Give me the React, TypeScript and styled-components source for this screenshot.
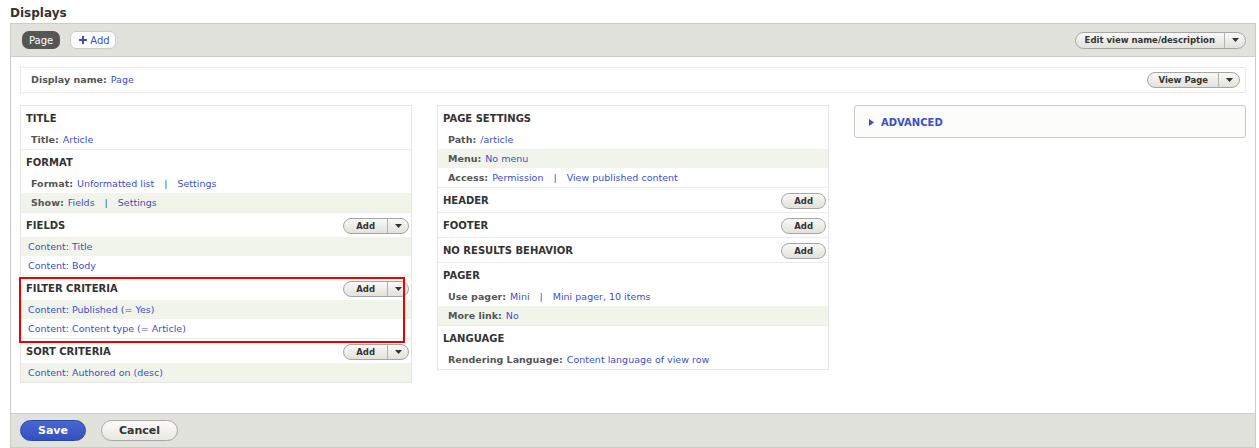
import React from "react";
import styled, { createGlobalStyle } from "styled-components";

const Global = createGlobalStyle`
  html, body { margin: 0; padding: 0; background: #fff; }
  body { font-family: "DejaVu Sans", Verdana, sans-serif; color: #333; }
  * { box-sizing: border-box; }
`;

const LINK = "#3d4fc6";
const SHADE = "#f0f4ea";

const Page = styled.div`
  padding: 0 3px 0 10px;
`;

const Heading = styled.h2`
  margin: 0 0 1px;
  padding-top: 4px;
  font-size: 12px;
  line-height: 18px;
  font-weight: bold;
  color: #333;
`;

const Frame = styled.div`
  border: 1px solid #ccc;
`;

const TopBar = styled.div`
  display: flex;
  align-items: center;
  justify-content: space-between;
  height: 33px;
  padding: 0 9px 0 11px;
  background: #e1e2dc;
  border-bottom: 1px solid #ccc;
`;

const Tabs = styled.div`
  display: flex;
  align-items: center;
  gap: 10px;
`;

const Tab = styled.span`
  display: inline-flex;
  align-items: center;
  height: 18px;
  padding: 0 7px;
  border-radius: 7px;
  background: #565656;
  color: #fff;
  font-size: 10px;
`;

const AddTab = styled.span`
  display: inline-flex;
  align-items: center;
  gap: 3px;
  height: 18px;
  padding: 0 5px 0 8px;
  border: 1px solid #ccc;
  border-radius: 6px;
  background: #fff;
  color: ${LINK};
  font-size: 10px;
`;

const Split = styled.span<{ $h: number }>`
  display: inline-flex;
  align-items: stretch;
  height: ${(p) => p.$h}px;
  border: 1px solid #a6a6a6;
  border-radius: ${(p) => p.$h / 2 + 1}px;
  background: linear-gradient(to bottom, #f9f9f7, #e2e1da);
  overflow: hidden;
`;

const SplitMain = styled.span<{ $pad: number }>`
  display: flex;
  align-items: center;
  padding: 0 ${(p) => p.$pad}px;
  font-size: 8.5px;
  font-weight: bold;
  color: #333;
  white-space: nowrap;
`;

const SplitArrow = styled.span`
  display: flex;
  align-items: center;
  justify-content: center;
  width: 21px;
  border-left: 1px solid #b5b5b0;
`;

const Body = styled.div`
  padding: 10px 9px 30px;
`;

const NameBar = styled.div`
  display: flex;
  align-items: center;
  justify-content: space-between;
  height: 26px;
  padding: 0 5px 0 10px;
  border: 1px solid #eaeaea;
  margin-bottom: 12px;
`;

const NameText = styled.span`
  display: flex;
  align-items: center;
  font-size: 9.5px;
  padding-bottom: 1px;
`;

const Columns = styled.div`
  display: grid;
  grid-template-columns: repeat(3, 1fr);
  column-gap: 25px;
  align-items: start;
`;

const Column = styled.div`
  border: 1px solid #e6e6e6;
  background: #fff;
`;

const Section = styled.div<{ $highlight?: boolean }>`
  position: relative;
  border-bottom: 1px solid #ececec;
  &:last-child { border-bottom: none; }
  ${(p) =>
    p.$highlight &&
    `&::after {
      content: "";
      position: absolute;
      left: -2px;
      right: 6px;
      top: 1px;
      bottom: -5px;
      border: 2px solid #ee0000;
      pointer-events: none;
      z-index: 2;
    }`}
`;

const SectionHeader = styled.div`
  display: flex;
  align-items: center;
  justify-content: space-between;
  height: 24px;
  padding: 1px 2px 0 5px;
`;

const SectionTitle = styled.span`
  font-size: 10px;
  font-weight: bold;
  color: #333;
  text-transform: uppercase;
`;

const Row = styled.div<{ $shaded?: boolean; $item?: boolean }>`
  display: flex;
  align-items: center;
  height: 19px;
  padding-left: ${(p) => (p.$item ? 7 : 10)}px;
  background: ${(p) => (p.$shaded ? SHADE : "transparent")};
  font-size: 9.5px;
  white-space: nowrap;
`;

const Label = styled.span`
  font-weight: bold;
  color: #555;
  margin-right: 4px;
`;

const Link = styled.span`
  color: ${LINK};
`;

const Pipe = styled.span`
  color: ${LINK};
  margin: 0 10px;
`;

const Advanced = styled.div`
  display: flex;
  align-items: center;
  gap: 7px;
  height: 33px;
  padding: 1px 0 0 14px;
  border: 1px solid #c8c8c8;
  border-radius: 3px;
  background: #fcfcfa;
  color: #3a4fc8;
  font-size: 10px;
  font-weight: bold;
`;

const BottomBar = styled.div`
  display: flex;
  align-items: center;
  gap: 15px;
  height: 34px;
  padding: 0 9px;
  background: #e1e2dc;
  border-top: 1px solid #ccc;
`;

const ActionButton = styled.span<{ $primary?: boolean }>`
  display: inline-flex;
  align-items: center;
  justify-content: center;
  height: 21px;
  padding: 0 17px;
  border-radius: 11px;
  border: 1px solid ${(p) => (p.$primary ? "#2d47a9" : "#a6a6a6")};
  background: ${(p) =>
    p.$primary
      ? "linear-gradient(to bottom, #4867d3, #3450bd)"
      : "linear-gradient(to bottom, #fbfbf9, #e8e7e1)"};
  color: ${(p) => (p.$primary ? "#fff" : "#333")};
  font-size: 11px;
  font-weight: bold;
`;

const DownArrow = () => (
  <svg width="7" height="4" viewBox="0 0 7 4">
    <polygon points="0,0 7,0 3.5,4" fill="#333" />
  </svg>
);

const SplitButton = ({ label, h = 16, pad = 12, arrow = true }: { label: string; h?: number; pad?: number; arrow?: boolean }) => (
  <Split $h={h}>
    <SplitMain $pad={pad}>{label}</SplitMain>
    {arrow && (
      <SplitArrow>
        <DownArrow />
      </SplitArrow>
    )}
  </Split>
);

type RowData = { label?: string; links: string[]; shaded?: boolean };
type SectionData = {
  title: string;
  add?: "split" | "single";
  highlight?: boolean;
  rows?: RowData[];
};

const left: SectionData[] = [
  { title: "Title", rows: [{ label: "Title:", links: ["Article"] }] },
  {
    title: "Format",
    rows: [
      { label: "Format:", links: ["Unformatted list", "Settings"] },
      { label: "Show:", links: ["Fields", "Settings"], shaded: true },
    ],
  },
  {
    title: "Fields",
    add: "split",
    rows: [
      { links: ["Content: Title"], shaded: true },
      { links: ["Content: Body"] },
    ],
  },
  {
    title: "Filter criteria",
    add: "split",
    highlight: true,
    rows: [
      { links: ["Content: Published (= Yes)"], shaded: true },
      { links: ["Content: Content type (= Article)"] },
    ],
  },
  {
    title: "Sort criteria",
    add: "split",
    rows: [{ links: ["Content: Authored on (desc)"], shaded: true }],
  },
];

const middle: SectionData[] = [
  {
    title: "Page settings",
    rows: [
      { label: "Path:", links: ["/article"] },
      { label: "Menu:", links: ["No menu"], shaded: true },
      { label: "Access:", links: ["Permission", "View published content"] },
    ],
  },
  { title: "Header", add: "single" },
  { title: "Footer", add: "single" },
  { title: "No results behavior", add: "single" },
  {
    title: "Pager",
    rows: [
      { label: "Use pager:", links: ["Mini", "Mini pager, 10 items"] },
      { label: "More link:", links: ["No"], shaded: true },
    ],
  },
  {
    title: "Language",
    rows: [{ label: "Rendering Language:", links: ["Content language of view row"] }],
  },
];

const SectionView = ({ s }: { s: SectionData }) => (
  <Section $highlight={s.highlight}>
    <SectionHeader>
      <SectionTitle>{s.title}</SectionTitle>
      {s.add === "split" && <SplitButton label="Add" />}
      {s.add === "single" && <SplitButton label="Add" arrow={false} />}
    </SectionHeader>
    {s.rows?.map((r, i) => (
      <Row key={i} $shaded={r.shaded} $item={!r.label}>
        {r.label && <Label>{r.label}</Label>}
        {r.links.map((l, j) => (
          <React.Fragment key={j}>
            {j > 0 && <Pipe>|</Pipe>}
            <Link>{l}</Link>
          </React.Fragment>
        ))}
      </Row>
    ))}
  </Section>
);

export default function App() {
  return (
    <>
      <Global />
      <Page>
        <Heading>Displays</Heading>
        <Frame>
          <TopBar>
            <Tabs>
              <Tab>Page</Tab>
              <AddTab>
                <svg width="8" height="8" viewBox="0 0 8 8">
                  <path d="M3 0h2v3h3v2H5v3H3V5H0V3h3z" fill={LINK} />
                </svg>
                Add
              </AddTab>
            </Tabs>
            <SplitButton label="Edit view name/description" h={17} pad={9} />
          </TopBar>
          <Body>
            <NameBar>
              <NameText>
                <Label>Display name:</Label>
                <Link>Page</Link>
              </NameText>
              <SplitButton label="View Page" pad={10} />
            </NameBar>
            <Columns>
              <Column>
                {left.map((s) => (
                  <SectionView key={s.title} s={s} />
                ))}
              </Column>
              <Column>
                {middle.map((s) => (
                  <SectionView key={s.title} s={s} />
                ))}
              </Column>
              <Advanced>
                <svg width="5" height="7" viewBox="0 0 5 7">
                  <polygon points="0,0 5,3.5 0,7" fill="#3a4fc8" />
                </svg>
                ADVANCED
              </Advanced>
            </Columns>
          </Body>
          <BottomBar>
            <ActionButton $primary>Save</ActionButton>
            <ActionButton>Cancel</ActionButton>
          </BottomBar>
        </Frame>
      </Page>
    </>
  );
}
